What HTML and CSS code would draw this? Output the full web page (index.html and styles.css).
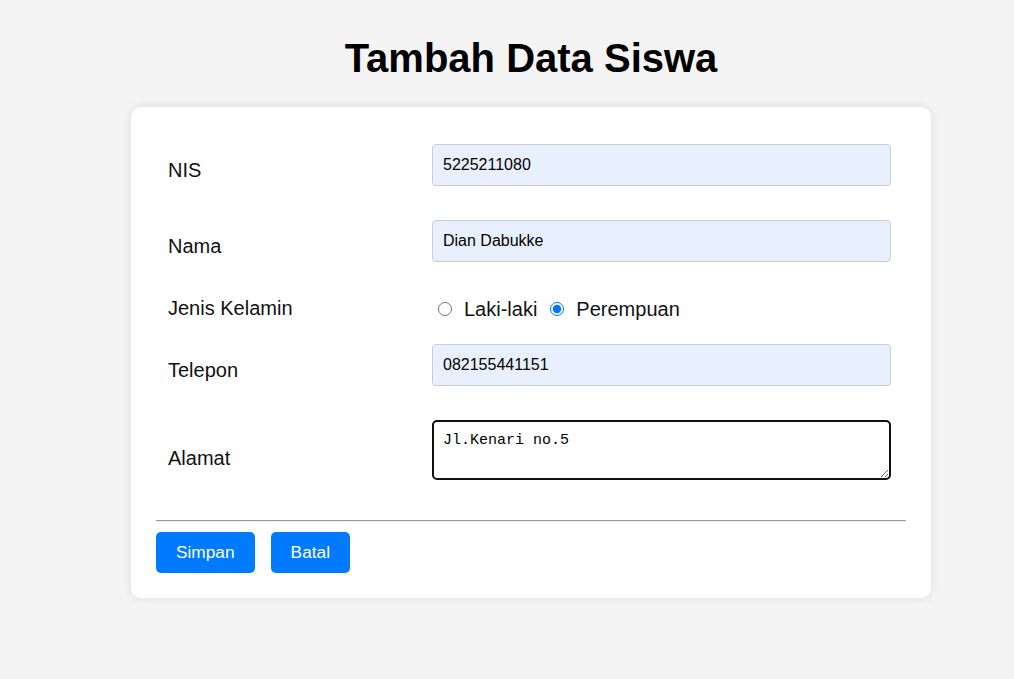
FILE: index.html
```html
<!DOCTYPE html>
<html lang="id">
<head>
<meta charset="utf-8">
<title>Tambah Data Siswa</title>
<link rel="stylesheet" href="styles.css">
</head>
<body>
<div class="page">
  <h1 class="title">Tambah Data Siswa</h1>
  <form class="card">
    <div class="form-grid">
      <div class="cell label">NIS</div>
      <div class="cell field"><input class="text-input" type="text" value="5225211080"></div>

      <div class="cell label">Nama</div>
      <div class="cell field"><input class="text-input" type="text" value="Dian Dabukke"></div>

      <div class="cell label">Jenis Kelamin</div>
      <div class="cell field radios">
        <label class="radio"><input type="radio" name="jk" value="L"> Laki-laki</label>
        <label class="radio"><input type="radio" name="jk" value="P" checked> Perempuan</label>
      </div>

      <div class="cell label">Telepon</div>
      <div class="cell field"><input class="text-input" type="text" value="082155441151"></div>

      <div class="cell label label-tall">Alamat</div>
      <div class="cell field"><textarea class="area" spellcheck="false">Jl.Kenari no.5</textarea></div>
    </div>
    <hr class="divider">
    <div class="actions">
      <button type="button" class="btn">Simpan</button>
      <button type="button" class="btn">Batal</button>
    </div>
  </form>
</div>
</body>
</html>
```
FILE: styles.css
```css
html, body {
  margin: 0;
  padding: 0;
}
body {
  background: #f4f4f4;
  font-family: "Liberation Sans", Arial, sans-serif;
  color: #111;
}
.page {
  padding: 8px 8px 8px 56px;
  display: flex;
  flex-direction: column;
  align-items: center;
}
.title {
  font-size: 40px;
  font-weight: bold;
  margin: 27px 0 26px;
  line-height: 46px;
  color: #000;
}
.card {
  width: 800px;
  box-sizing: border-box;
  background: #fff;
  border-radius: 10px;
  box-shadow: 0 0 10px rgba(0, 0, 0, 0.1);
  padding: 25px;
}
.form-grid {
  display: grid;
  grid-template-columns: 264px 486px;
}
.cell {
  padding: 12px;
  display: flex;
  align-items: center;
}
.label {
  font-size: 20px;
  line-height: 23px;
}
.label-tall {
  padding-top: 18px;
}
.text-input {
  box-sizing: border-box;
  width: 459px;
  height: 42px;
  margin: 0 0 10px 0;
  padding: 0 10px;
  border: 1px solid #c9ccd1;
  border-radius: 4px;
  background: #e8f0fe;
  font-family: "Liberation Sans", Arial, sans-serif;
  font-size: 16px;
  color: #000;
  outline: none;
}
.radios {
  font-size: 20px;
  line-height: 24px;
  padding-top: 13px;
  padding-bottom: 11px;
}
.radio {
  display: inline-flex;
  align-items: center;
  margin-right: 7px;
}
.radio input {
  margin: 0 12px 0 6px;
  width: 14px;
  height: 14px;
}
.area {
  box-sizing: border-box;
  width: 459px;
  height: 60px;
  margin: 0 0 10px 0;
  padding: 10px 9px;
  border: 2px solid #101010;
  border-radius: 5px;
  font-family: "Liberation Mono", "DejaVu Sans Mono", monospace;
  font-size: 15px;
  line-height: 17px;
  color: #000;
  outline: none;
  background: #fff;
}
.divider {
  margin: 18px 0 10px;
  border: 0;
  border-top: 1px solid #9a9a9a;
  border-bottom: 1px solid #eee;
  height: 0;
}
.actions {
  display: flex;
  gap: 16px;
}
.btn {
  background: #007bff;
  color: #fff;
  border: 0;
  border-radius: 5px;
  padding: 10px 20px;
  font-family: "Liberation Sans", Arial, sans-serif;
  font-size: 17.3px;
  line-height: 21px;
}
```
